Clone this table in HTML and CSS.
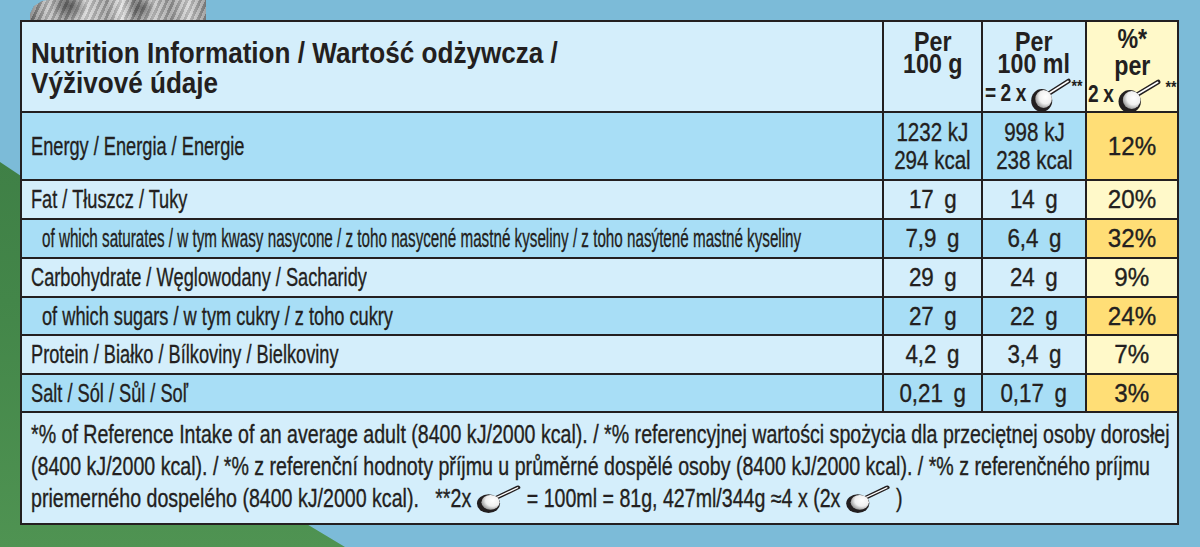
FILE: index.html
```html
<!DOCTYPE html>
<html lang="en">
<head>
<meta charset="utf-8">
<title>Nutrition Information</title>
<link rel="stylesheet" href="styles.css">
</head>
<body>
<div class="backdrop"><div class="green"></div><div class="photo"></div></div>
<div class="panel">
  <div class="cell lt head-title"><div class="sq title">Nutrition Information / Wartość odżywcza /<br>Výživové údaje</div></div>
  <div class="cell lt hcol h1"><div class="sq hc"><div>Per</div><div>100 g</div></div></div>
  <div class="cell lt hcol h2"><div class="sq hc"><div>Per</div><div>100 ml</div><div class="h-l3">= 2 x <svg class="scoop sc-h" viewBox="0 0 44 34" preserveAspectRatio="none"><defs><radialGradient id="bw1" cx="0.62" cy="0.38" r="0.7"><stop offset="0" stop-color="#ffffff"/><stop offset="0.55" stop-color="#f0f0f0"/><stop offset="1" stop-color="#888888"/></radialGradient></defs><path d="M19 16 L41 3" stroke="#231f20" stroke-width="4.6" stroke-linecap="round"/><path d="M20 15.2 L40.6 3.3" stroke="#ffffff" stroke-width="1.6" stroke-linecap="round"/><circle cx="12" cy="22.5" r="11.4" fill="#231f20"/><circle cx="14" cy="21" r="9" fill="url(#bw1)"/></svg><span class="ast">**</span></div></div></div>
  <div class="cell yl hcol h3"><div class="sq hc"><div>%*</div><div class="h-per">per</div><div class="h-l3">2 x <svg class="scoop sc-h3" viewBox="0 0 44 34" preserveAspectRatio="none"><defs><radialGradient id="bw2" cx="0.62" cy="0.38" r="0.7"><stop offset="0" stop-color="#ffffff"/><stop offset="0.55" stop-color="#f0f0f0"/><stop offset="1" stop-color="#888888"/></radialGradient></defs><path d="M19 16 L41 3" stroke="#231f20" stroke-width="4.6" stroke-linecap="round"/><path d="M20 15.2 L40.6 3.3" stroke="#ffffff" stroke-width="1.6" stroke-linecap="round"/><circle cx="12" cy="22.5" r="11.4" fill="#231f20"/><circle cx="14" cy="21" r="9" fill="url(#bw2)"/></svg><span class="ast ast3">**</span></div></div></div>

  <div class="cell md lab"><span class="sq lt-t">Energy / Energia / Energie</span></div>
  <div class="cell md num"><div class="sq kj">1232 kJ<br>294 kcal</div></div>
  <div class="cell md num"><div class="sq kj">998 kJ<br>238 kcal</div></div>
  <div class="cell yd num"><span class="sq pc">12%</span></div>

  <div class="cell lt lab"><span class="sq lt-t">Fat / Tłuszcz / Tuky</span></div>
  <div class="cell lt num"><span class="sq v">17 g</span></div>
  <div class="cell lt num"><span class="sq v">14 g</span></div>
  <div class="cell yl num"><span class="sq pc">20%</span></div>

  <div class="cell md lab sub"><span class="sq sat-t">of which saturates / w tym kwasy nasycone / z toho nasycené mastné kyseliny / z toho nasýtené mastné kyseliny</span></div>
  <div class="cell md num"><span class="sq v">7,9 g</span></div>
  <div class="cell md num"><span class="sq v">6,4 g</span></div>
  <div class="cell yd num"><span class="sq pc">32%</span></div>

  <div class="cell lt lab"><span class="sq lt-t">Carbohydrate / Węglowodany / Sacharidy</span></div>
  <div class="cell lt num"><span class="sq v">29 g</span></div>
  <div class="cell lt num"><span class="sq v">24 g</span></div>
  <div class="cell yl num"><span class="sq pc">9%</span></div>

  <div class="cell md lab sub"><span class="sq sug-t">of which sugars / w tym cukry / z toho cukry</span></div>
  <div class="cell md num"><span class="sq v">27 g</span></div>
  <div class="cell md num"><span class="sq v">22 g</span></div>
  <div class="cell yd num"><span class="sq pc">24%</span></div>

  <div class="cell lt lab"><span class="sq lt-t">Protein / Białko / Bílkoviny / Bielkoviny</span></div>
  <div class="cell lt num"><span class="sq v">4,2 g</span></div>
  <div class="cell lt num"><span class="sq v">3,4 g</span></div>
  <div class="cell yl num"><span class="sq pc">7%</span></div>

  <div class="cell md lab"><span class="sq lt-t">Salt / Sól / Sůl / Soľ</span></div>
  <div class="cell md num"><span class="sq v">0,21 g</span></div>
  <div class="cell md num"><span class="sq v">0,17 g</span></div>
  <div class="cell yd num"><span class="sq pc">3%</span></div>

  <div class="cell lt foot"><div class="sq foot-t">
    <div>*% of Reference Intake of an average adult (8400 kJ/2000 kcal). / *% referencyjnej wartości spożycia dla przeciętnej osoby dorosłej</div>
    <div>(8400 kJ/2000 kcal). / *% z referenční hodnoty příjmu u průměrné dospělé osoby (8400 kJ/2000 kcal). / *% z referenčného príjmu</div>
    <div>priemerného dospelého (8400 kJ/2000 kcal).&nbsp;&nbsp; **2x <svg class="scoop sc-f" viewBox="0 0 44 34" preserveAspectRatio="none"><defs><radialGradient id="bw3" cx="0.62" cy="0.38" r="0.7"><stop offset="0" stop-color="#ffffff"/><stop offset="0.55" stop-color="#f0f0f0"/><stop offset="1" stop-color="#888888"/></radialGradient></defs><path d="M19 16 L41 3" stroke="#231f20" stroke-width="4.6" stroke-linecap="round"/><path d="M20 15.2 L40.6 3.3" stroke="#ffffff" stroke-width="1.6" stroke-linecap="round"/><circle cx="12" cy="22.5" r="11.4" fill="#231f20"/><circle cx="14" cy="21" r="9" fill="url(#bw3)"/></svg> = 100ml = 81g, 427ml/344g ≈4 x (2x <svg class="scoop sc-f" viewBox="0 0 44 34" preserveAspectRatio="none"><defs><radialGradient id="bw4" cx="0.62" cy="0.38" r="0.7"><stop offset="0" stop-color="#ffffff"/><stop offset="0.55" stop-color="#f0f0f0"/><stop offset="1" stop-color="#888888"/></radialGradient></defs><path d="M19 16 L41 3" stroke="#231f20" stroke-width="4.6" stroke-linecap="round"/><path d="M20 15.2 L40.6 3.3" stroke="#ffffff" stroke-width="1.6" stroke-linecap="round"/><circle cx="12" cy="22.5" r="11.4" fill="#231f20"/><circle cx="14" cy="21" r="9" fill="url(#bw4)"/></svg> )</div>
  </div></div>
</div>
</body>
</html>
```

FILE: styles.css
```css
* { box-sizing: border-box; }
html, body { margin: 0; }
body {
  width: 1200px;
  height: 547px;
  overflow: hidden;
  padding: 20px 0 0 20px;
  background: #7cbbd8;
  font-family: "Liberation Sans", Arial, sans-serif;
  color: #231f20;
  position: relative;
}
.backdrop { position: absolute; inset: 0; z-index: 0; }
.green {
  position: absolute;
  inset: 0;
  background: linear-gradient(180deg, #3b7943 0%, #438649 55%, #4f9352 100%);
  clip-path: polygon(0 162px, 24px 178px, 24px 520px, 300px 520px, 345px 547px, 0 547px);
}
.photo {
  position: absolute;
  left: 30px;
  top: 0;
  width: 176px;
  height: 21px;
  background:
    radial-gradient(ellipse 18px 14px at 40px 6px, rgba(40,40,40,0.55), transparent),
    radial-gradient(ellipse 14px 12px at 112px 8px, rgba(40,40,40,0.45), transparent),
    repeating-linear-gradient(115deg, rgba(255,255,255,0.25) 0 3px, rgba(0,0,0,0.12) 3px 6px),
    linear-gradient(90deg, #6a6a6a 0%, #bdbdbd 10%, #8a8a8a 20%, #d2d2d2 32%, #9a9a9a 44%, #dedede 52%, #7c7c7c 60%, #c6c6c6 70%, #939393 80%, #d0d0d0 90%, #858585 100%);
  clip-path: polygon(0 14px, 4px 6px, 12px 1px, 18px 0, 176px 0, 176px 21px, 0 21px);
}
.panel {
  position: relative;
  z-index: 1;
  display: grid;
  grid-template-columns: 860px 97px 102px 90px;
  grid-template-rows: 89px 66px 37px 37px 37px 36px 37px 36px 110px;
  gap: 2px;
  padding: 2px;
  width: 1159px;
  background: #231f20;
}
.cell { display: flex; align-items: center; min-width: 0; overflow: visible; }
.lt { background: #d4eefb; }
.md { background: #a8def6; }
.yl { background: #fff9c9; }
.yd { background: #ffde76; }

.sq { display: inline-block; white-space: nowrap; }

.head-title { align-items: flex-start; padding: 16px 0 0 9px; }
.title {
  font-weight: 700;
  font-size: 30px;
  line-height: 30px;
  transform: scaleX(0.87);
  transform-origin: left top;
}
.hcol { justify-content: center; align-items: flex-start; }
.h1, .h2 { padding-top: 9px; }
.h3 { padding-top: 6px; }
.hc {
  font-weight: 700;
  font-size: 28px;
  line-height: 22px;
  text-align: center;
  transform: scaleX(0.83);
  transform-origin: center top;
}
.h-l3 { font-size: 23px; word-spacing: -1px; }
.h2 .h-l3 { margin-top: 1px; }
.h-per { margin-top: 5px; }
.h3 .h-l3 { margin-top: 0; }
.scoop { display: inline-block; vertical-align: -11px; }
.sc-h { width: 49px; height: 34px; }
.sc-h3 { width: 52px; height: 34px; }
.ast { font-size: 17px; vertical-align: 9px; }
.ast3 { margin-left: 5px; }

.lab { padding-left: 9px; }
.lab.sub { padding-left: 20px; }
.lt-t, .sat-t, .sug-t, .kj, .v, .pc, .foot-t {
  -webkit-text-stroke: 0.35px #231f20;
}
.lt-t, .sat-t, .sug-t {
  font-size: 26px;
  transform-origin: left center;
}
.lt-t { transform: scaleX(0.70); }
.sat-t { transform: scaleX(0.585); }
.sug-t { transform: scaleX(0.70); }

.num { justify-content: center; }
.kj {
  font-size: 26px;
  line-height: 28px;
  text-align: center;
  transform: scaleX(0.79);
}
.v { font-size: 26px; word-spacing: 5px; transform: scaleX(0.86); }
.pc { font-size: 26px; transform: scaleX(0.93); }

.foot { grid-column: 1 / -1; align-items: flex-start; padding: 5px 0 0 9px; }
.foot-t {
  font-size: 25px;
  line-height: 32px;
  transform: scaleX(0.784);
  transform-origin: left top;
}
.sc-f { width: 57px; height: 28px; vertical-align: -6px; }
```
